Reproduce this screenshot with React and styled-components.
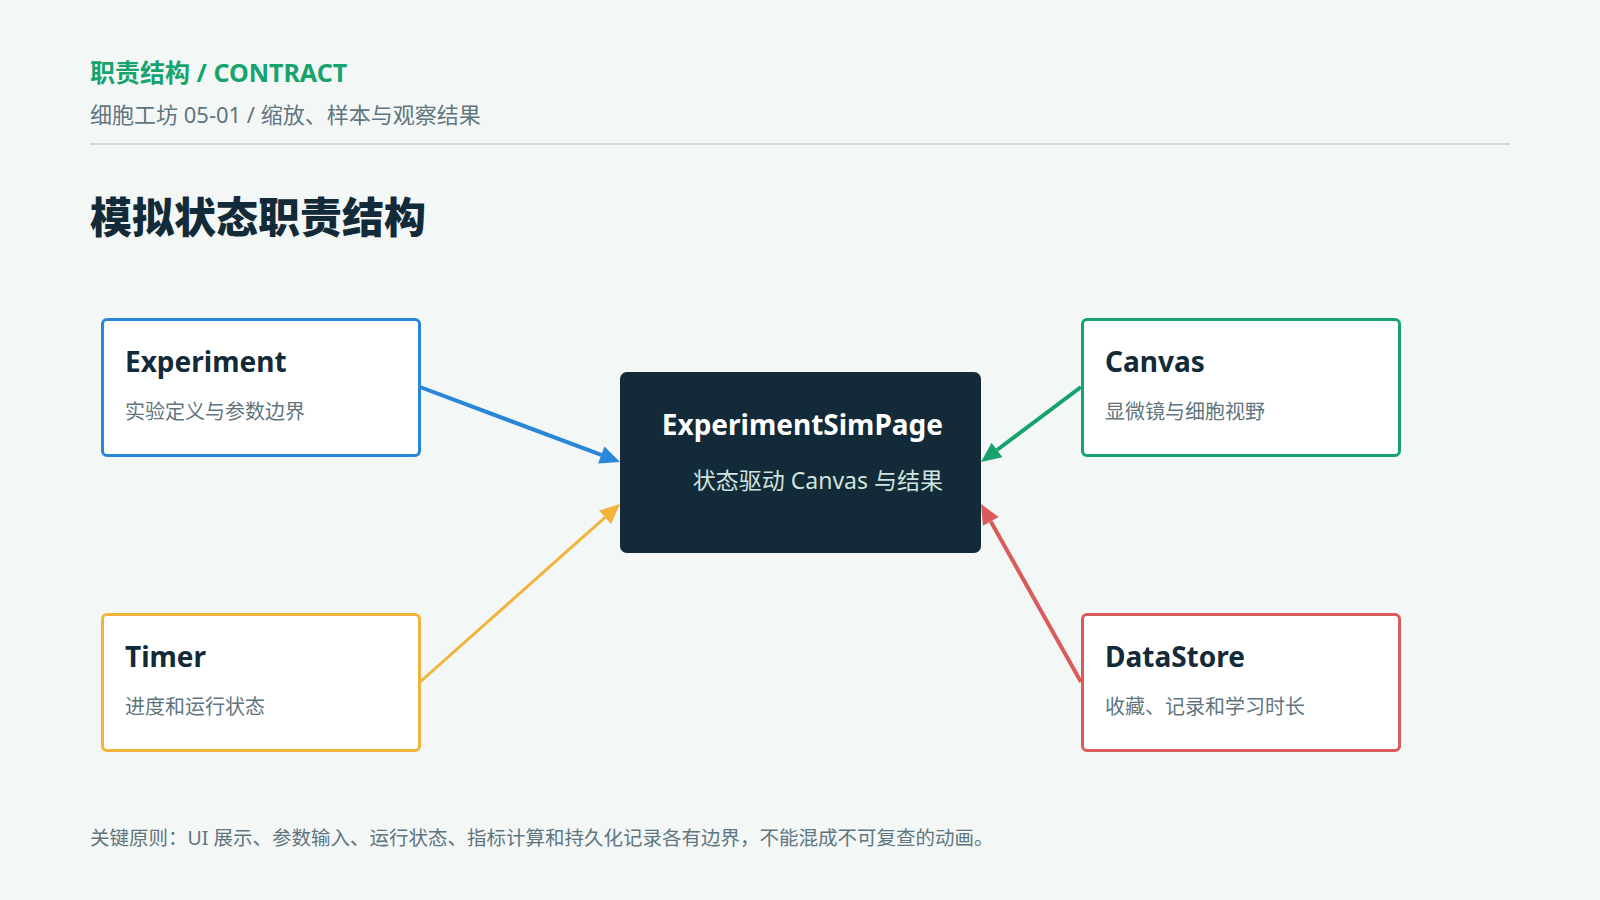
import React from "react";
import styled, { createGlobalStyle } from "styled-components";

const Global = createGlobalStyle`
  html, body { margin: 0; background: #f3f7f6; }
  body { font-family: "Noto Sans", "Noto Sans CJK SC", sans-serif; }
`;
const Page = styled.div`
  width: 1600px; height: 900px; box-sizing: border-box; padding: 55px 90px 0;
  display: flex; flex-direction: column;
`;
const Kicker = styled.div`
  color: #17a36d; font-weight: 700; font-size: 25px; line-height: 34px;
`;
const Sub = styled.div`
  color: #5f7580; font-size: 22px; line-height: 30px; margin-top: 10px;
`;
const Rule = styled.div`
  height: 2px; background: #cfdcd8; margin-top: 14px;
`;
const Title = styled.h1`
  margin: 44px 0 0; color: #132a38; font-size: 42px; font-weight: 800; line-height: 56px;
`;
const Diagram = styled.div`
  position: relative; height: 460px; margin-top: 57px;
`;
const Node = styled.div`
  position: absolute; left: ${p => p.$x}px; top: ${p => p.$y}px;
  width: 320px; height: 139px; box-sizing: border-box;
  background: #fff; border: 3px solid ${p => p.$c}; border-radius: 6px;
  padding: 20px 21px;
`;
const NodeTitle = styled.div`
  color: #132a38; font-weight: 700; font-size: 28px; line-height: 40px;
`;
const NodeSub = styled.div`
  color: #5f7580; font-size: 20px; line-height: 28px; margin-top: 17px;
`;
const Center = styled.div`
  position: absolute; left: 530px; top: 70px; width: 361px; height: 181px;
  box-sizing: border-box; background: #132a38; border-radius: 7px;
  padding: 30px 38px 0; text-align: right;
`;
const CenterTitle = styled.div`
  color: #fff; font-weight: 700; font-size: 28px; line-height: 44px;
`;
const CenterSub = styled.div`
  color: #cfe3de; font-size: 23px; line-height: 32px; margin-top: 18px;
`;
const Arrows = styled.svg`
  position: absolute; left: 0; top: 0; width: 1420px; height: 460px; overflow: visible;
`;
const Footer = styled.div`
  margin-top: 62px; color: #5f7580; font-size: 19.5px; line-height: 28px;
`;

const arrows = [
  { c: "#2a86d8", x1: 330, y1: 85, x2: 530, y2: 160, w: 4 },
  { c: "#17a36d", x1: 991, y1: 85, x2: 891, y2: 160, w: 4 },
  { c: "#f2b33d", x1: 330, y1: 380, x2: 530, y2: 202, w: 3 },
  { c: "#d95b5b", x1: 991, y1: 380, x2: 891, y2: 202, w: 4 },
];

function Arrow({ c, x1, y1, x2, y2, w }) {
  const a = Math.atan2(y2 - y1, x2 - x1);
  const L = 20, W = 9;
  const bx = x2 - L * Math.cos(a), by = y2 - L * Math.sin(a);
  const px = -Math.sin(a) * W, py = Math.cos(a) * W;
  return (
    <g>
      <line x1={x1} y1={y1} x2={bx} y2={by} stroke={c} strokeWidth={w} />
      <polygon points={`${x2},${y2} ${bx + px},${by + py} ${bx - px},${by - py}`} fill={c} />
    </g>
  );
}

export default function App() {
  return (
    <Page>
      <Global />
      <Kicker>职责结构 / CONTRACT</Kicker>
      <Sub>细胞工坊 05-01 / 缩放、样本与观察结果</Sub>
      <Rule />
      <Title>模拟状态职责结构</Title>
      <Diagram>
        <Arrows viewBox="0 0 1420 460">
          {arrows.map((a, i) => <Arrow key={i} {...a} />)}
        </Arrows>
        <Node $x={11} $y={16} $c="#2a86d8">
          <NodeTitle>Experiment</NodeTitle>
          <NodeSub>实验定义与参数边界</NodeSub>
        </Node>
        <Node $x={991} $y={16} $c="#17a36d">
          <NodeTitle>Canvas</NodeTitle>
          <NodeSub>显微镜与细胞视野</NodeSub>
        </Node>
        <Node $x={11} $y={311} $c="#f2b33d">
          <NodeTitle>Timer</NodeTitle>
          <NodeSub>进度和运行状态</NodeSub>
        </Node>
        <Node $x={991} $y={311} $c="#d95b5b">
          <NodeTitle>DataStore</NodeTitle>
          <NodeSub>收藏、记录和学习时长</NodeSub>
        </Node>
        <Center>
          <CenterTitle>ExperimentSimPage</CenterTitle>
          <CenterSub>状态驱动 Canvas 与结果</CenterSub>
        </Center>
      </Diagram>
      <Footer>关键原则：UI 展示、参数输入、运行状态、指标计算和持久化记录各有边界，不能混成不可复查的动画。</Footer>
    </Page>
  );
}
